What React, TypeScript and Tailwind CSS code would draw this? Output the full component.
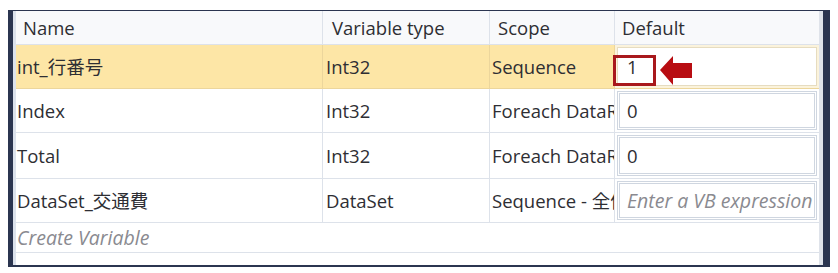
import React from "react";

const font = { fontFamily: '"Open Sans", "Noto Sans CJK JP", sans-serif' };

type Row = { name: string; type: string; scope: string; def: string; placeholder?: boolean };

const rows: Row[] = [
  { name: "Index", type: "Int32", scope: "Foreach DataRow", def: "0" },
  { name: "Total", type: "Int32", scope: "Foreach DataRow", def: "0" },
  { name: "DataSet_交通費", type: "DataSet", scope: "Sequence - 全体", def: "Enter a VB expression", placeholder: true },
];

const Cell: React.FC<{ children: React.ReactNode; className?: string }> = ({ children, className = "" }) => (
  <div className={`flex items-center overflow-hidden whitespace-nowrap border-r border-b border-[#dde2ea] ${className}`}>
    {children}
  </div>
);

const App: React.FC = () => {
  return (
    <div className="h-[273px] w-[838px] bg-white pl-[8px] pt-[10px] text-[18.5px] text-[#2e2e33]" style={font}>
      <div className="flex h-[257px] w-[822px] border-t border-b-2 border-l-[5px] border-r-[7px] border-[#2b3550]">
        <div className="w-[3px] bg-[#dce2ec]" />
        <div className="relative flex flex-1 flex-col">
          <div className="grid grid-cols-[307px_167px_125px_1fr] grid-rows-[34px_44px_44px_46px_44px]">
            {/* header */}
            <Cell className="bg-[#f8f9fb] pl-[7px]">Name</Cell>
            <Cell className="bg-[#f8f9fb] pl-[9px]">Variable type</Cell>
            <Cell className="bg-[#f8f9fb] pl-[8px]">Scope</Cell>
            <Cell className="bg-[#f8f9fb] pl-[7px] border-r-0">Default</Cell>

            {/* selected row */}
            <Cell className="bg-[#fde6a6] border-[#ecd69c] pl-[1px]">int_行番号</Cell>
            <Cell className="bg-[#fde6a6] border-[#ecd69c] pl-[3px]">Int32</Cell>
            <Cell className="bg-[#fde6a6] border-[#ecd69c] pl-[2px]">Sequence</Cell>
            <div className="flex border-b border-[#ecd69c] bg-[#fbf3dc] p-[2px]">
              <div className="flex flex-1 items-center border border-[#e6dcc0] bg-white pl-[9px]">1</div>
            </div>

            {rows.map((r) => (
              <React.Fragment key={r.name}>
                <Cell className="pl-[1px]">{r.name}</Cell>
                <Cell className="pl-[3px]">{r.type}</Cell>
                <Cell className="pl-[2px]">{r.scope}</Cell>
                <div className="flex border-b border-[#dde2ea] p-[2px]">
                  <div className="flex flex-1 items-center overflow-hidden whitespace-nowrap border-[3px] border-double border-[#cfd6e0] bg-white pl-[7px]">
                    <span className={r.placeholder ? "text-[19.5px] italic text-[#8a8a90]" : ""}>{r.def}</span>
                  </div>
                </div>
              </React.Fragment>
            ))}
          </div>
          <div className="flex h-[30px] items-center border-b border-[#dde2ea] pl-[1px] text-[19.5px] italic text-[#8a8a90]">
            Create Variable
          </div>

          {/* annotation */}
          <div className="absolute left-[597px] top-[44px] h-[31px] w-[43px] border-[3px] border-[#a8181c]" />
          <svg className="absolute left-[644px] top-[44px]" width="34" height="32" viewBox="0 0 34 32">
            <polygon points="0,15 13,1 13,8 32,8 32,23 13,23 13,30" fill="#b80d12" />
          </svg>
        </div>
        <div className="w-[4px] bg-[#dfe3ea]" />
      </div>
    </div>
  );
};

export default App;
